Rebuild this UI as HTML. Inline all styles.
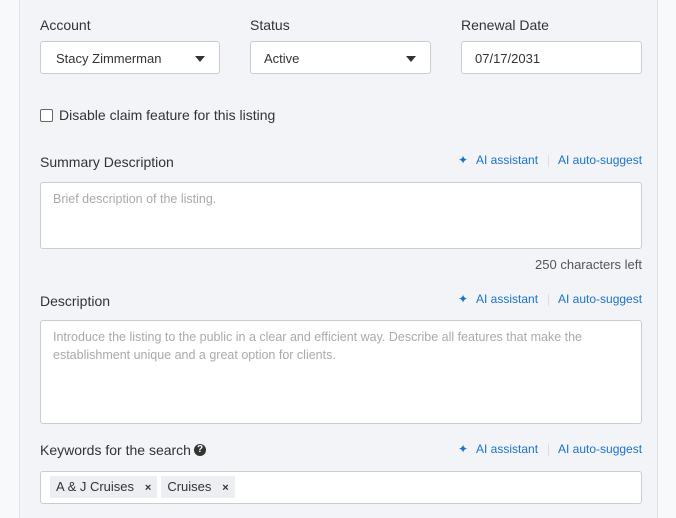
<!DOCTYPE html><html><head><style>
body{margin:0;width:676px;height:508px;background:#f8f9fb;font-family:"Liberation Sans",sans-serif;overflow:hidden;position:relative;color:#333}
.panel{position:absolute;left:19px;top:-2px;width:637px;height:520px;background:#f3f4f8;border-left:1px solid #dfe1e6;border-right:1px solid #dfe1e6}
.a{position:absolute}
.lbl{font-size:14px;color:#333}
.inp{position:absolute;background:#fff;border:1px solid #c9ccd2;border-radius:3px;box-sizing:border-box;font-size:13px;color:#333}
.ph{color:#aaa;font-size:12.5px;line-height:18px}
.ai{font-size:12px;color:#1a73c8;white-space:nowrap}
.tag{display:inline-block;background:#eceef1;padding:0 6px;height:22px;line-height:22px;font-size:13px;color:#333;margin-right:4px}
.caret{position:absolute;right:14px;top:14px;width:0;height:0;border-left:5px solid transparent;border-right:5px solid transparent;border-top:6px solid #333}
.sep{position:absolute;left:548px;width:1px;height:12px;background:#dde}
</style></head><body>
<div class="panel"></div>
<div class="a lbl" style="left:40px;top:17px">Account</div>
<div class="a lbl" style="left:250px;top:17px">Status</div>
<div class="a lbl" style="left:461px;top:17px">Renewal Date</div>
<div class="inp" style="left:40px;top:41px;width:180px;height:33px;padding:9px 15px">Stacy Zimmerman<div class="caret"></div></div>
<div class="inp" style="left:250px;top:41px;width:181px;height:33px;padding:9px 13px">Active<div class="caret"></div></div>
<div class="inp" style="left:461px;top:41px;width:181px;height:33px;padding:9px 13px">07/17/2031</div>
<div class="a" style="left:40px;top:109px;width:11px;height:11px;border:1px solid #666;border-radius:2px;background:#fff"></div>
<div class="a lbl" style="left:59px;top:107px">Disable claim feature for this listing</div>

<div class="a lbl" style="left:40px;top:154px">Summary Description</div>
<div class="a ai" style="left:458px;top:153px">✦</div><div class="a ai" style="left:476px;top:153px">AI assistant</div><div class="sep" style="top:155px"></div><div class="a ai" style="left:558px;top:153px">AI auto-suggest</div>
<div class="inp" style="left:40px;top:182px;width:602px;height:67px;padding:7px 12px"><span class="ph">Brief description of the listing.</span></div>
<div class="a" style="right:34px;top:257px;font-size:13px;color:#555">250 characters left</div>

<div class="a lbl" style="left:40px;top:293px">Description</div>
<div class="a ai" style="left:458px;top:292px">✦</div><div class="a ai" style="left:476px;top:292px">AI assistant</div><div class="sep" style="top:294px"></div><div class="a ai" style="left:558px;top:292px">AI auto-suggest</div>
<div class="inp" style="left:40px;top:320px;width:602px;height:104px;padding:7px 12px"><span class="ph">Introduce the listing to the public in a clear and efficient way. Describe all features that make the establishment unique and a great option for clients.</span></div>

<div class="a lbl" style="left:40px;top:442px">Keywords for the search</div>
<div class="a" style="left:194px;top:444px;width:12px;height:12px;border-radius:50%;background:#333;color:#fff;font-size:10px;line-height:12px;text-align:center;font-weight:bold">?</div>
<div class="a ai" style="left:458px;top:442px">✦</div><div class="a ai" style="left:476px;top:442px">AI assistant</div><div class="sep" style="top:444px"></div><div class="a ai" style="left:558px;top:442px">AI auto-suggest</div>
<div class="inp" style="left:40px;top:471px;width:602px;height:33px;padding:4px 9px"><span class="tag">A &amp; J Cruises &nbsp; <b style="font-size:11px">×</b></span><span class="tag">Cruises &nbsp; <b style="font-size:11px">×</b></span></div>
</body></html>
